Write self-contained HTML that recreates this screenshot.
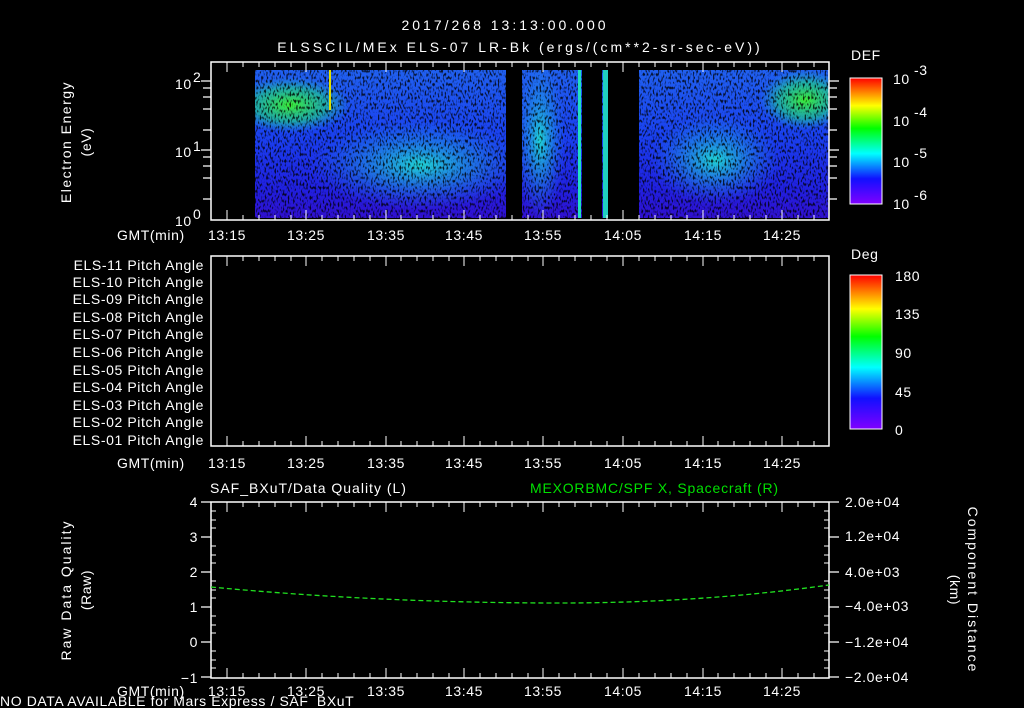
<!DOCTYPE html>
<html><head><meta charset="utf-8"><style>
html,body{margin:0;padding:0;background:#000;}
svg{display:block}
text{font-family:"Liberation Sans",sans-serif;fill:#fff;font-size:14px;letter-spacing:0.6px}
</style></head><body>
<svg width="1024" height="708" viewBox="0 0 1024 708" xmlns="http://www.w3.org/2000/svg">
<defs>
<linearGradient id="rb" x1="0" y1="1" x2="0" y2="0">
<stop offset="0" stop-color="#8000ff"/><stop offset="0.2" stop-color="#1010ff"/><stop offset="0.4" stop-color="#00ffff"/><stop offset="0.6" stop-color="#00ff00"/><stop offset="0.78" stop-color="#ffff00"/><stop offset="1" stop-color="#ff0000"/>
</linearGradient>
<linearGradient id="bg" x1="0" y1="0" x2="0" y2="1">
<stop offset="0" stop-color="#2060f0"/><stop offset="0.45" stop-color="#1a40f0"/><stop offset="0.8" stop-color="#2020e0"/><stop offset="1" stop-color="#3010d0"/>
</linearGradient>
<radialGradient id="gr"><stop offset="0" stop-color="#40ff20" stop-opacity="0.9"/><stop offset="0.6" stop-color="#20e080" stop-opacity="0.6"/><stop offset="1" stop-color="#20c0c0" stop-opacity="0"/></radialGradient>
<radialGradient id="cy"><stop offset="0" stop-color="#20f0d0" stop-opacity="0.85"/><stop offset="1" stop-color="#2090f0" stop-opacity="0"/></radialGradient>
<filter id="nz" x="0" y="0" width="1" height="1"><feTurbulence type="fractalNoise" baseFrequency="0.6 0.3" numOctaves="1" seed="3"/><feColorMatrix type="matrix" values="0 0 0 0 0  0 0 0 0 0  0 0 0 0 0  0 0 0 -5 2.5"/></filter>
<clipPath id="cp"><rect x="255" y="70" width="574" height="148"/></clipPath>
</defs>

<text x="505" y="30" text-anchor="middle" font-size="18" style="letter-spacing:3px">2017/268 13:13:00.000</text>
<text x="520" y="52" text-anchor="middle" font-size="17" style="letter-spacing:3px">ELSSCIL/MEx ELS-07 LR-Bk  (ergs/(cm**2-sr-sec-eV))</text>

<!-- Panel 1 data -->
<g clip-path="url(#cp)">
<rect x="255" y="70" width="574" height="148" fill="url(#bg)"/>
<ellipse cx="290" cy="105" rx="60" ry="28" fill="url(#gr)"/>
<ellipse cx="420" cy="165" rx="110" ry="45" fill="url(#cy)"/>
<ellipse cx="540" cy="140" rx="25" ry="80" fill="url(#cy)"/>
<ellipse cx="715" cy="160" rx="65" ry="45" fill="url(#cy)"/>
<ellipse cx="805" cy="100" rx="45" ry="30" fill="url(#gr)"/>
<rect x="255" y="70" width="574" height="148" fill="#000" filter="url(#nz)" opacity="0.8"/>
<rect x="506" y="70" width="16" height="148" fill="#000"/>
<rect x="582" y="70" width="20" height="148" fill="#000"/>
<rect x="608" y="70" width="31" height="148" fill="#000"/>
<rect x="578" y="70" width="3" height="148" fill="#20e0c0"/>
<rect x="603" y="70" width="5" height="148" fill="#20d0c0"/>
<rect x="329" y="70" width="2" height="40" fill="#e0e000"/>
</g>
<rect x="211" y="62" width="618" height="158" fill="none" stroke="#fff" stroke-width="1.5"/>
<text x="71" y="142" transform="rotate(-90 71 142)" text-anchor="middle" font-size="15" style="letter-spacing:1.5px">Electron Energy</text>
<text x="91" y="142" transform="rotate(-90 91 142)" text-anchor="middle" font-size="15">(eV)</text>
<text x="175" y="89" font-size="15">10</text><text x="193" y="82" font-size="10">2</text>
<text x="175" y="157" font-size="15">10</text><text x="193" y="151" font-size="10">1</text>
<text x="175" y="226" font-size="15">10</text><text x="193" y="219" font-size="10">0</text>
<g stroke="#fff" stroke-width="1.2">
<path d="M201 81h10M203 88h8M203 97h8M203 109h8M203 130h8M201 150h10M203 157h8M203 166h8M203 178h8M203 199h8M839 81h-10M837 88h-8M837 97h-8M837 109h-8M837 130h-8M839 150h-10M837 157h-8M837 166h-8M837 178h-8M837 199h-8"/>
</g>
<text x="117" y="240">GMT(min)</text>
<g text-anchor="middle" font-size="15">
<text x="227" y="240">13:15</text><text x="306" y="240">13:25</text><text x="386" y="240">13:35</text><text x="464" y="240">13:45</text><text x="543" y="240">13:55</text><text x="623" y="240">14:05</text><text x="703" y="240">14:15</text><text x="782" y="240">14:25</text>
</g>

<!-- colorbar 1 -->
<text x="851" y="60" font-size="16">DEF</text>
<rect x="850" y="78" width="32" height="126" fill="url(#rb)" stroke="#fff"/>
<text x="893" y="84" font-size="17">10</text><text x="914" y="75" font-size="11">-3</text>
<text x="893" y="126" font-size="17">10</text><text x="914" y="117" font-size="11">-4</text>
<text x="893" y="167" font-size="17">10</text><text x="914" y="158" font-size="11">-5</text>
<text x="893" y="209" font-size="17">10</text><text x="914" y="200" font-size="11">-6</text>

<!-- Panel 2 -->
<rect x="211" y="256" width="618" height="190" fill="none" stroke="#fff" stroke-width="1.5"/>
<g text-anchor="end" font-size="13.5">
<text x="204" y="270">ELS-11 Pitch Angle</text><text x="204" y="287">ELS-10 Pitch Angle</text><text x="204" y="304">ELS-09 Pitch Angle</text><text x="204" y="322">ELS-08 Pitch Angle</text><text x="204" y="339">ELS-07 Pitch Angle</text><text x="204" y="357">ELS-06 Pitch Angle</text><text x="204" y="375">ELS-05 Pitch Angle</text><text x="204" y="392">ELS-04 Pitch Angle</text><text x="204" y="410">ELS-03 Pitch Angle</text><text x="204" y="427">ELS-02 Pitch Angle</text><text x="204" y="445">ELS-01 Pitch Angle</text>
</g>
<text x="117" y="468">GMT(min)</text>
<g text-anchor="middle" font-size="15">
<text x="227" y="468">13:15</text><text x="306" y="468">13:25</text><text x="386" y="468">13:35</text><text x="464" y="468">13:45</text><text x="543" y="468">13:55</text><text x="623" y="468">14:05</text><text x="703" y="468">14:15</text><text x="782" y="468">14:25</text>
</g>
<text x="851" y="259" font-size="16">Deg</text>
<rect x="850" y="275" width="32" height="154" fill="url(#rb)" stroke="#fff"/>
<g font-size="17"><text x="895" y="281">180</text><text x="895" y="319">135</text><text x="895" y="358">90</text><text x="895" y="397">45</text><text x="895" y="435">0</text></g>

<!-- Panel 3 -->
<text x="210" y="493" font-size="15" style="letter-spacing:1px">SAF_BXuT/Data Quality (L)</text>
<text x="530" y="493" font-size="15" style="fill:#00e000;letter-spacing:0.8px">MEXORBMC/SPF X, Spacecraft (R)</text>
<rect x="211" y="502" width="618" height="176" fill="none" stroke="#fff" stroke-width="1.5"/>
<g stroke="#fff" stroke-width="1.2">
<path d="M201 502h10M201 537h10M201 572h10M201 607h10M201 642h10M201 677h10M829 502h10M829 537h10M829 572h10M829 607h10M829 642h10M829 677h10"/>
</g>
<g text-anchor="end" font-size="15"><text x="198" y="507">4</text><text x="198" y="542">3</text><text x="198" y="577">2</text><text x="198" y="612">1</text><text x="198" y="647">0</text><text x="198" y="683">−1</text></g>
<g font-size="13.5"><text x="845" y="507">2.0e+04</text><text x="845" y="541">1.2e+04</text><text x="845" y="577">4.0e+03</text><text x="845" y="611">−4.0e+03</text><text x="845" y="647">−1.2e+04</text><text x="845" y="682">−2.0e+04</text></g>
<text x="71" y="590" transform="rotate(-90 71 590)" text-anchor="middle" font-size="15" style="letter-spacing:2px">Raw Data Quality</text>
<text x="91" y="590" transform="rotate(-90 91 590)" text-anchor="middle" font-size="15">(Raw)</text>
<text x="968" y="590" transform="rotate(90 968 590)" text-anchor="middle" font-size="15" style="letter-spacing:2px">Component Distance</text>
<text x="950" y="590" transform="rotate(90 950 590)" text-anchor="middle" font-size="15">(km)</text>
<path d="M211 587 Q380 603 560 603 Q700 603 829 585" fill="none" stroke="#20e020" stroke-width="1.3" stroke-dasharray="5 3"/>
<text x="117" y="696">GMT(min)</text>
<g text-anchor="middle" font-size="15">
<text x="227" y="696">13:15</text><text x="306" y="696">13:25</text><text x="386" y="696">13:35</text><text x="464" y="696">13:45</text><text x="543" y="696">13:55</text><text x="623" y="696">14:05</text><text x="703" y="696">14:15</text><text x="782" y="696">14:25</text>
</g>
<text x="0" y="706" font-size="12">NO DATA AVAILABLE for Mars Express / SAF_BXuT</text>

<!-- minor ticks -->
<g stroke="#fff" stroke-width="1">
<path id="tk" d="M227 62v10M243 62v5M259 62v5M275 62v5M291 62v5M306 62v10M322 62v5M338 62v5M354 62v5M370 62v5M386 62v10M401 62v5M417 62v5M433 62v5M449 62v5M464 62v10M480 62v5M496 62v5M512 62v5M528 62v5M543 62v10M559 62v5M575 62v5M591 62v5M607 62v5M623 62v10M639 62v5M655 62v5M671 62v5M687 62v5M703 62v10M718 62v5M734 62v5M750 62v5M766 62v5M782 62v10M798 62v5M814 62v5"/>
<use href="#tk" transform="translate(0 282) scale(1 -1)"/>
<use href="#tk" transform="translate(0 194)"/>
<use href="#tk" transform="translate(0 508) scale(1 -1)"/>
<use href="#tk" transform="translate(0 440)"/>
<use href="#tk" transform="translate(0 740) scale(1 -1)"/>
</g>
<g stroke="#fff" stroke-width="1">
<path d="M211 511h5M211 520h5M211 528h5M211 546h5M211 555h5M211 563h5M211 581h5M211 590h5M211 598h5M211 616h5M211 625h5M211 633h5M211 651h5M211 660h5M211 668h5M829 511h-5M829 520h-5M829 528h-5M829 546h-5M829 555h-5M829 563h-5M829 581h-5M829 590h-5M829 598h-5M829 616h-5M829 625h-5M829 633h-5M829 651h-5M829 660h-5M829 668h-5"/>
</g>
</svg>
</body></html>
